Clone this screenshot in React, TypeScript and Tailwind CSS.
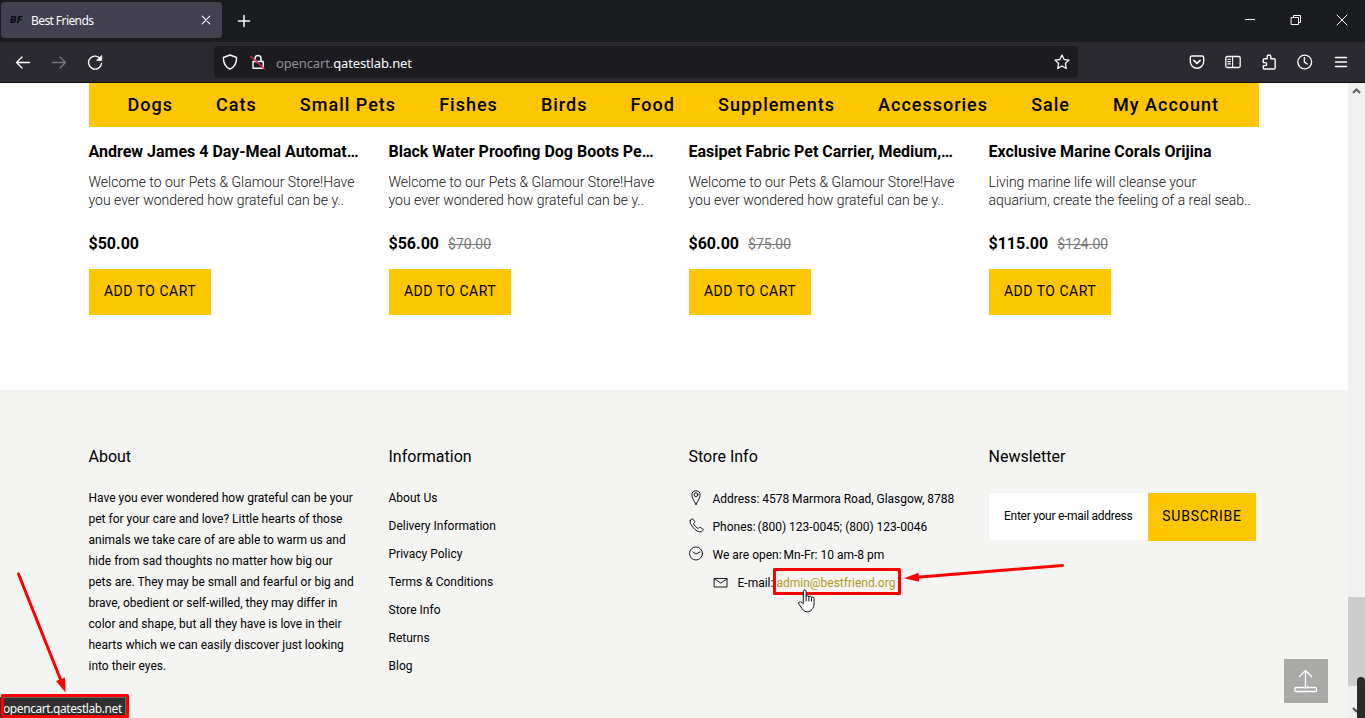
import React from "react";

const navItems = ["Dogs", "Cats", "Small Pets", "Fishes", "Birds", "Food", "Supplements", "Accessories", "Sale", "My Account"];

const products = [
  { title: "Andrew James 4 Day-Meal Automat…", lines: ["Welcome to our Pets & Glamour Store!Have", "you ever wondered how grateful can be y.."], price: "$50.00", old: "" },
  { title: "Black Water Proofing Dog Boots Pe…", lines: ["Welcome to our Pets & Glamour Store!Have", "you ever wondered how grateful can be y.."], price: "$56.00", old: "$70.00" },
  { title: "Easipet Fabric Pet Carrier, Medium,…", lines: ["Welcome to our Pets & Glamour Store!Have", "you ever wondered how grateful can be y.."], price: "$60.00", old: "$75.00" },
  { title: "Exclusive Marine Corals Orijina", lines: ["Living marine life will cleanse your", "aquarium, create the feeling of a real seab.."], price: "$115.00", old: "$124.00" },
];

const aboutLines = [
  "Have you ever wondered how grateful can be your",
  "pet for your care and love? Little hearts of those",
  "animals we take care of are able to warm us and",
  "hide from sad thoughts no matter how big our",
  "pets are. They may be small and fearful or big and",
  "brave, obedient or self-willed, they may differ in",
  "color and shape, but all they have is love in their",
  "hearts which we can easily discover just looking",
  "into their eyes.",
];

const links = ["About Us", "Delivery Information", "Privacy Policy", "Terms & Conditions", "Store Info", "Returns", "Blog"];

function Svg({ w = 16, h = 16, className = "", sw = 1.3, children }: { w?: number; h?: number; className?: string; sw?: number; children: React.ReactNode }) {
  return (
    <svg width={w} height={h} viewBox={`0 0 ${w} ${h}`} fill="none" stroke="currentColor" strokeWidth={sw} strokeLinecap="round" strokeLinejoin="round" className={`block shrink-0 ${className}`}>
      {children}
    </svg>
  );
}

function TabStrip() {
  return (
    <div className="flex h-[42px] shrink-0 items-start bg-[#1b1c1f] text-[#fbfbfe]">
      <div className="mt-[2px] ml-[1px] flex h-[36px] w-[221px] items-center rounded-[4px] bg-[#42414d] pr-[11px] pl-[9px]">
        <span className="w-[21px] pt-px font-['DejaVu_Sans'] text-[9px] font-bold tracking-[-0.2px] text-[#0b0b10] italic">BF</span>
        <span className="grow pt-[2px] font-['Noto_Sans'] text-[12px] tracking-[-0.58px]">Best Friends</span>
        <Svg w={10} h={10} sw={1.1}><path d="M1.2 1.2l7.6 7.6M8.8 1.2l-7.6 7.6" /></Svg>
      </div>
      <Svg w={14} h={14} className="mt-[14px] ml-[15px]" sw={1.5}><path d="M7 1.5v11M1.5 7h11" /></Svg>
      <div className="ml-auto flex pt-[14px] pr-[17px]">
        <Svg w={12} h={12} className="mr-[34px]" sw={1}><path d="M1.5 5.500h9" strokeLinecap="square" /></Svg>
        <Svg w={12} h={12} className="mr-[34px]" sw={1}><path d="M1.500 3.500h7v7h-7zM3.500 3.500v-2h7v7h-2" strokeLinejoin="miter" /></Svg>
        <Svg w={12} h={12} sw={1}><path d="M1 1l10 10M11 1L1 11" /></Svg>
      </div>
    </div>
  );
}

function Toolbar() {
  return (
    <div className="flex h-[41px] shrink-0 items-center border-b border-[#101012] bg-[#2b2a30] text-[#fbfbfe]">
      <Svg className="ml-[15px]" sw={1.4}><path d="M14.500 8.500H1.500M7 3L1.500 8.500l5.500 5.500" /></Svg>
      <Svg className="ml-[20px] text-[#77767d]" sw={1.4}><path d="M1.500 8.500h13M9 3l5.500 5.500L9 14" /></Svg>
      <Svg className="ml-[20px]" sw={1.4}>
        <path d="M13.600 5.200A6.500 6.500 0 1 0 14.500 9.500" />
        <path d="M14.700 1.800v4.600H10z" fill="currentColor" strokeWidth="0.800" />
      </Svg>
      <div className="ml-[111px] flex h-[32px] w-[864px] items-center rounded-[4px] bg-[#1c1b20]">
        <Svg className="ml-[8px]" sw={1.4}><path d="M8 1L14.600 3.500C14.700 9 12.500 13 8 15.200 3.500 13 1.300 9 1.400 3.500z" /></Svg>
        <Svg className="ml-[12px]" sw={1.4}>
          <path d="M5 7V4.500a3 3 0 0 1 6 0V7M3 7.500h10.200v6.700H3z" />
          <path d="M1 2.500l13.200 12.300" stroke="#e22850" />
        </Svg>
        <span className="ml-[10px] pt-[3px] font-['Noto_Sans'] text-[13px] tracking-[-0.13px] text-[#8f8f98]">opencart.<span className="text-[#fbfbfe]">qatestlab.net</span></span>
        <Svg className="mr-[8px] ml-auto" sw={1.3}><path d="M8 1l2.100 4.500 4.900.6-3.600 3.400.9 4.900L8 12l-4.300 2.400.9-4.900L1 6.100l4.900-.6z" /></Svg>
      </div>
      <div className="ml-auto flex items-center gap-[20px] pr-[16px]">
        <Svg sw={1.4}>
          <path d="M3 2h10q1.700 0 1.700 1.700V7.500a6.700 6.700 0 0 1-13.400 0V3.700Q1.300 2 3 2z" />
          <path d="M4.800 6.400L8 9.400l3.200-3" strokeWidth="1.600" />
        </Svg>
        <Svg sw={1.3}>
          <rect x="0.800" y="2.500" width="14.400" height="11" rx="1.500" />
          <path d="M7.600 2.500v11M2.900 5.300h2.500M2.900 7.600h2.500M2.900 9.900h2.500" strokeWidth="1.100" />
        </Svg>
        <Svg sw={1.4}><path d="M6.200 4.800V2.800a1.800 1.800 0 0 1 3.600 0v2h3.200q1.200 0 1.200 1.200V14q0 1-1.200 1H3.500q-1.200 0-1.200-1v-2.400h1.900a1.500 1.500 0 0 0 0-3H2.300V6q0-1.200 1.200-1.200z" /></Svg>
        <Svg sw={1.4}><circle cx="7.700" cy="8" r="6.900" /><path d="M7.400 3.800V8.200l2.900 1.800" /></Svg>
        <Svg sw={1.4}><path d="M2.500 3.500h11M2.500 8h11M2.500 12.500h11" /></Svg>
      </div>
    </div>
  );
}

function ProductCard({ p }: { p: (typeof products)[number] }) {
  return (
    <div className="flex w-[270px] flex-col items-start text-black">
      <h3 className="-ml-[0.5px] h-[20px] text-[16px] leading-[20px] font-bold whitespace-nowrap">{p.title}</h3>
      <div className="mt-[11px] -ml-[0.5px] h-[36px] text-[14px] leading-[18px] font-light whitespace-nowrap text-[#111]">
        {p.lines.map((l) => <p key={l}>{l}</p>)}
      </div>
      <div className="mt-[25px] -ml-[0.5px] flex h-[20px] items-center gap-[9px]">
        <span className="text-[16px] leading-[20px] font-bold">{p.price}</span>
        {p.old && <span className="text-[14px] leading-[20px] text-[#777] line-through">{p.old}</span>}
      </div>
      <button className="mt-[15px] h-[46px] w-[122px] bg-[#fdc600] pb-[2px] text-[14px] tracking-[0.5px]">ADD TO CART</button>
    </div>
  );
}

function StoreRow({ icon, text, className = "" }: { icon: React.ReactNode; text: React.ReactNode; className?: string }) {
  return (
    <li className={`flex h-[28px] items-center whitespace-nowrap ${className}`}>
      {icon}
      <span className="ml-[9px]">{text}</span>
    </li>
  );
}

function Footer() {
  return (
    <footer className="flex h-[328px] gap-[30px] bg-[#f4f4f3] pt-[57px] pl-[88.5px] text-[12px] text-black">
      <section className="w-[270px]">
        <h4 className="text-[16px] leading-[20px]">About</h4>
        <div className="mt-[21px] leading-[21px] whitespace-nowrap">
          {aboutLines.map((l) => <p key={l}>{l}</p>)}
        </div>
      </section>
      <section className="w-[270px]">
        <h4 className="text-[16px] leading-[20px]">Information</h4>
        <ul className="mt-[17px] leading-[28px]">
          {links.map((l) => <li key={l}>{l}</li>)}
        </ul>
      </section>
      <section className="w-[270px]">
        <h4 className="text-[16px] leading-[20px]">Store Info</h4>
        <ul className="mt-[18px]">
          <StoreRow text={<span className="tracking-[-0.02px]">Address: 4578 Marmora Road, Glasgow, 8788</span>} icon={
            <Svg w={15} h={18} sw={0.9}><path d="M7 14.500C4.800 10.500 2.900 7.500 2.900 4.900a4.100 4.100 0 0 1 8.200 0C11.100 7.500 9.200 10.500 7 14.500z" /><circle cx="7" cy="4.700" r="1.900" /></Svg>} />
          <StoreRow text={<><span className="-mr-px">Phones: </span>(800) 123-0045; (800) 123-0046</>} icon={
            <Svg w={15} h={18} sw={0.9}><path d="M1.200 2.300L2.800 1q.8-.5 1.400.3l1.500 2.200q.4.800-.3 1.300l-1 .9q1.500 3 4.800 4.900l1-1q.6-.6 1.400-.1l2.200 1.500q.7.600.1 1.300l-1.500 1.500Q8.300 14.500 3.600 9 -.3 4.500 1.200 2.300z" /></Svg>} />
          <StoreRow text={<><span className="-mr-px">We are open: </span>Mn-Fr: 10 am-8 pm</>} icon={
            <Svg w={15} h={18} sw={0.9}><circle cx="7" cy="7.500" r="6.500" /><path d="M4 6l3 2 4-2" /></Svg>} />
          <StoreRow className="pl-[24px]" text={<>E-mail: <a className="text-[#b39a1c]">admin@bestfriend.org</a></>} icon={
            <Svg w={16} h={16} sw={0.9}><path d="M1.500 3.500h12.500v8.500H1.500zM1.500 4l6.200 4 6.300-4" /></Svg>} />
        </ul>
      </section>
      <section className="w-[270px]">
        <h4 className="text-[16px] leading-[20px]">Newsletter</h4>
        <div className="mt-[26px] ml-[0.5px] flex items-start">
          <div className="flex h-[47px] w-[159px] items-center bg-white pb-px pl-[15px] tracking-[-0.27px] whitespace-nowrap">Enter your e-mail address</div>
          <button className="h-[48px] w-[108px] bg-[#fdc600] pb-[2px] text-[14px] tracking-[0.75px]">SUBSCRIBE</button>
        </div>
      </section>
    </footer>
  );
}

function Annotations() {
  return (
    <svg width="1365" height="718" viewBox="0 0 1365 718" className="pointer-events-none absolute top-0 left-0">
      <g fill="none" stroke="#fe0000" strokeWidth="3" strokeLinejoin="round" strokeLinecap="round">
        <rect x="774.500" y="569.500" width="125" height="24" />
        <rect x="2.500" y="695.500" width="125" height="21" />
        <path d="M18.500 574L61.500 682" />
        <path d="M1062.500 565.500L917 577.200" />
      </g>
      <path d="M65.500 692.500L56 681l9-3.500z" fill="#fe0000" />
      <path d="M904 578.200L918.500 572.800l.7 9z" fill="#fe0000" />
      <g transform="translate(797.500 589.500)">
        <path d="M5.300 14V2q0-1.500 1.400-1.500T8.100 2v5.200q.3-1 1.400-1t1.400 1.300q.3-.8 1.300-.8t1.300 1.400q.4-.6 1.300-.5 1.300.2 1.300 1.600v5.300q0 3-1.500 4.600-1.700 3.400-5.200 3.400-3.300 0-5-3L.9 14.700q-.7-1.500.5-2.200 1.200-.6 2.300.5z" transform="translate(0.500 0)" fill="#fff" stroke="#111" strokeWidth="1" strokeLinejoin="round" />
        <path d="M8.600 7v5M11.400 7.500v4.500M14 8.200v4" stroke="#111" strokeWidth="1" />
      </g>
    </svg>
  );
}

export default function App() {
  return (
    <div className="relative flex h-[718px] w-[1365px] flex-col overflow-hidden bg-white font-[Roboto,sans-serif]">
      <TabStrip />
      <Toolbar />
      <div className="flex min-h-0 grow">
        <main className="flex w-[1348px] flex-col">
          <nav className="ml-[89px] flex h-[44px] w-[1170px] items-center gap-[43.1px] bg-[#fdc600] pb-[2px] pl-[38.5px] text-[18px] font-medium tracking-[1px] whitespace-nowrap text-black">
            {navItems.map((n) => <a key={n}>{n}</a>)}
          </nav>
          <div className="flex h-[263px] gap-[30px] pt-[15px] pl-[89px]">
            {products.map((p) => <ProductCard key={p.title} p={p} />)}
          </div>
          <Footer />
        </main>
        <div className="flex w-[17px] flex-col items-center bg-[#f0f0f0]">
          <Svg w={11} h={8} className="mt-[4px] text-[#606060]" sw={2}><path d="M2 6l3.500-3.500L9 6" strokeLinecap="butt" strokeLinejoin="miter" /></Svg>
          <div className="mt-[502px] h-[89px] w-full bg-[#cdcdcd]" />
          <Svg w={11} h={8} className="mt-[20px] text-[#505050]" sw={2}><path d="M2 2l3.500 3.500L9 2" strokeLinecap="butt" /></Svg>
        </div>
      </div>
      <div className="absolute top-[659px] left-[1284px] flex h-[44px] w-[44px] items-center justify-center bg-[#a9a9a8] text-white">
        <Svg w={24} h={24} sw={1.3}><path d="M11.500 19V1.500M5.500 7.500l6-6 6 6" /><rect x="0.800" y="18.500" width="21.700" height="4" rx="1.200" /></Svg>
      </div>
      <div className="absolute top-[677px] left-[1357px] h-[60px] w-[8px] rounded-t-[4px] bg-[#2b2b2b]" />
      <div className="absolute top-[697px] left-0 flex h-[21px] w-[126px] items-center border-t border-r border-[#666] bg-[#2f3030] pt-[2px] pl-[3px] font-['Noto_Sans'] text-[12px] tracking-[-0.42px] whitespace-nowrap text-[#fbfbfe]">opencart.qatestlab.net</div>
      <Annotations />
    </div>
  );
}
